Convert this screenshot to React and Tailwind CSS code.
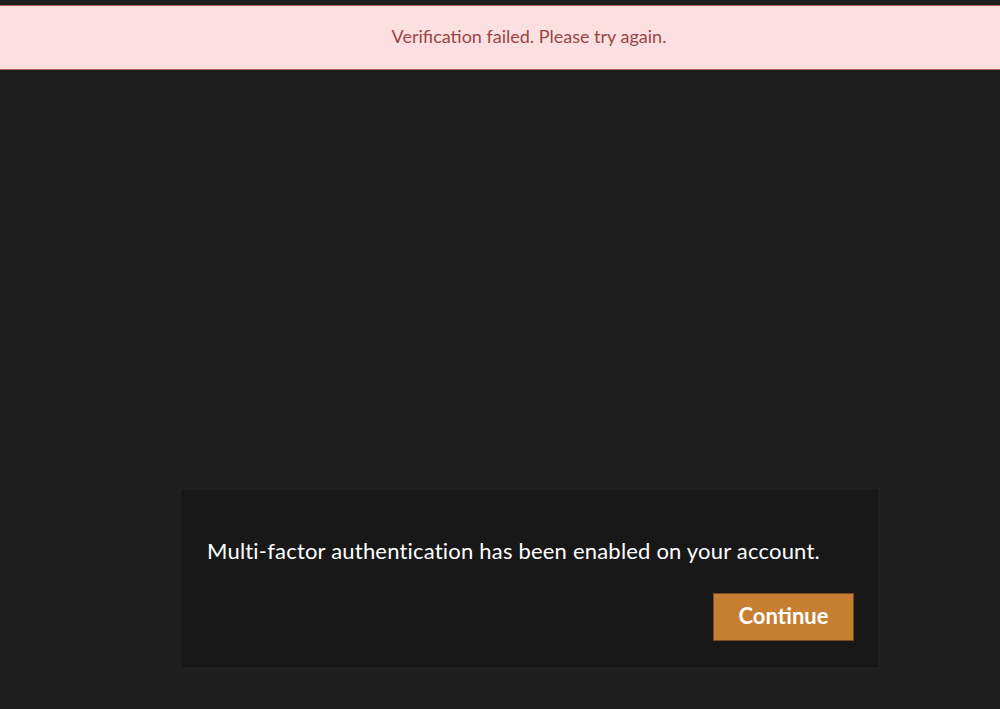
export default function App() {
  return (
    <div className="min-h-[709px] bg-[#1f1f1f] pt-[5px] font-['Lato',sans-serif]">
      <div className="h-[65px] border-y border-[#b06060] bg-[#fcdfe0] pl-[58px] pb-[3px] flex items-center justify-center">
        <p className="text-[18px] text-[#9a4545]">Verification failed. Please try again.</p>
      </div>

      <div className="ml-[182px] mt-[420px] w-[696px] bg-[#181818] border border-[#151515] pl-[24px] pr-[23px] pt-[46px] pb-[25px]">
        <p className="text-[22px] leading-[28px] tracking-[0.2px] text-white">
          Multi-factor authentication has been enabled on your account.
        </p>
        <div className="mt-[28px] flex justify-end">
          <button className="w-[141px] h-[48px] pb-[3px] bg-[#c67f31] border border-[#7a4a1c] text-white font-bold text-[22px]">
            Continue
          </button>
        </div>
      </div>
    </div>
  );
}
